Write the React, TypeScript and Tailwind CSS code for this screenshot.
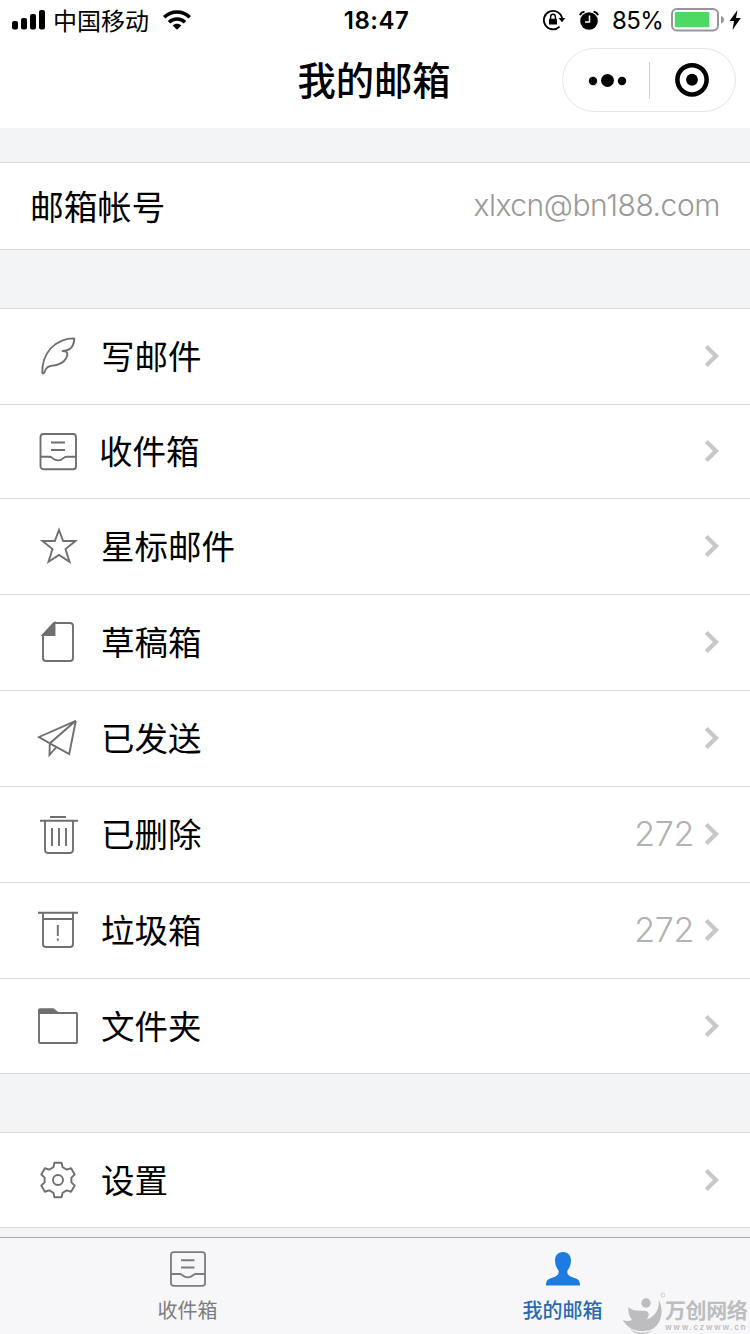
import React from 'react';
import clsx from 'clsx';

type IconProps = { className?: string };

const stroke = {
  fill: 'none',
  stroke: 'currentColor',
  strokeWidth: 1.9,
};

const IconBox: React.FC<{ children: React.ReactNode }> = ({ children }) => (
  <svg viewBox="0 0 44 44" className="h-11 w-11 shrink-0 text-[#6f6f6f]" {...stroke}>
    {children}
  </svg>
);

const FeatherIcon = () => (
  <IconBox>
    <path
      d="M38.2 4.4C30 4.2 20.5 7.6 14.5 14.5C9 21 6.2 30 6.3 38.3C6.5 40 7.9 39.8 8.5 38.2C9.6 35 11 33 13.8 32.2C18.5 31.2 23.5 31.4 28 27C31 23.8 32.6 19.5 30.2 17.8C29.2 17.2 28 17.1 26.6 17C31.5 16.8 35.2 15.2 36.8 11.4C37.8 9 38.6 6.6 38.2 4.4Z"
      strokeLinejoin="round"
    />
  </IconBox>
);

const InboxShape = () => (
  <>
    <rect x="4.5" y="5" width="35.5" height="35.2" rx="3" />
    <path d="M15 13.5H29M15 21H29" />
    <path d="M4.5 27.8H14C16.5 27.8 17 31.4 22 31.4C27 31.4 27.5 27.8 30 27.8H40" />
  </>
);

const InboxIcon = () => (
  <IconBox>
    <InboxShape />
  </IconBox>
);

const StarIcon = () => (
  <IconBox>
    <path d="M23 6L27.2 17H39.5L29.5 25L33.5 37.7L23 31L12.500 37.7L16.500 25L6.500 17H18.800Z" />
  </IconBox>
);

const DraftIcon = () => (
  <IconBox>
    <path d="M7 15V38Q7 41 10 41H34Q37 41 37 38V6Q37 3 34 3H18Z" strokeLinejoin="round" />
    <path d="M7 15L18.5 3V15Z" fill="currentColor" />
  </IconBox>
);

const SentIcon = () => (
  <IconBox>
    <path d="M39.8 4.8L3 21L13.8 27.3ZM13.8 27.3L33.2 38L39.8 4.8M13.8 27.3L13.500 39L20 31.500" />
  </IconBox>
);

const TrashIcon = () => (
  <IconBox>
    <path d="M14 5H30M4 8.8H42M9 9V37.5Q9 41 12.5 41H33.5Q37 41 37 37.5V9M16 16V34M23 16V34M30 16V34" />
  </IconBox>
);

const JunkIcon = () => (
  <IconBox>
    <path d="M2 4.8H42M7 5V36Q7 39 10 39H34Q37 39 37 36V5M7 11H37M21.8 17V28M21.8 30.5V32.8" />
  </IconBox>
);

const FolderIcon = () => (
  <IconBox>
    <path d="M3 9H40.2Q41 9 41 10V38Q41 39 40 39H4Q3 39 3 38Z" />
    <path d="M2 9V6Q2 4.3 4 4.3H17.5L23.5 9Z" fill="currentColor" stroke="none" />
  </IconBox>
);

// half outline of one tooth, repeated six times around the hub
const tooth = [
  [-4.6, -12.8],
  [-3.6, -17.2],
  [3.6, -17.2],
  [4.6, -12.8],
];
const gearPoints = [0, 60, 120, 180, 240, 300]
  .flatMap((deg) => {
    const a = (deg * Math.PI) / 180;
    return tooth.map(([x, y]) => {
      const px = 22 + x * Math.cos(a) - y * Math.sin(a);
      const py = 22 + x * Math.sin(a) + y * Math.cos(a);
      return `${px.toFixed(2)},${py.toFixed(2)}`;
    });
  })
  .join(' ');

const GearIcon = () => (
  <IconBox>
    <polygon points={gearPoints} strokeLinejoin="round" />
    <circle cx="22" cy="22" r="5" />
  </IconBox>
);

const Chevron = () => (
  <svg viewBox="0 0 16 24" className="h-6 w-4 shrink-0" fill="none" stroke="#c7c7cc" strokeWidth="4.2">
    <path d="M2.3 2.6L12 12L2.3 21.4" />
  </svg>
);

const SignalIcon = () => (
  <svg viewBox="0 0 34 22" className="h-[22px] w-[34px]" fill="#000">
    <rect x="0" y="12" width="6" height="8.5" rx="2" />
    <rect x="9" y="9" width="6" height="11.5" rx="2" />
    <rect x="18" y="5" width="6" height="15.5" rx="2" />
    <rect x="27" y="1" width="6" height="19.5" rx="2" />
  </svg>
);

const WifiIcon = () => (
  <svg viewBox="0 0 28 20" className="h-5 w-7" fill="none" stroke="#000" strokeWidth="3.5">
    <path d="M1.2 7.3C8.5 0.3 19.5 0.3 26.8 7.3" />
    <path d="M6 12.2C10.5 8 17.5 8 22 12.2" />
    <path d="M9.6 15.6C12 13.2 16 13.2 18.4 15.6L14 19.8Z" fill="#000" stroke="none" />
  </svg>
);

const RotationLockIcon = () => (
  <svg viewBox="0 0 24 22" className="h-[22px] w-6" fill="none" stroke="#000" strokeWidth="1.8">
    <path d="M17.6 17.6A9.2 9.2 0 1 1 20.2 10" />
    <path d="M16.5 9H23.3L20 13.2Z" fill="#000" stroke="none" />
    <rect x="7" y="9.8" width="8" height="5.8" rx="0.6" fill="#000" stroke="none" />
    <path d="M8.6 10V8A2.4 2.7 0 0 1 13.4 8V10" strokeWidth="1.4" />
  </svg>
);

const AlarmIcon = () => (
  <svg viewBox="0 0 20 20" className="h-5 w-5">
    <circle cx="10" cy="11" r="8.8" fill="#000" />
    <path d="M1 5.2Q2 2 5.5 1.6M19 5.2Q18 2 14.5 1.6" fill="none" stroke="#000" strokeWidth="1.9" />
    <path d="M10.5 5.5V12H6" fill="none" stroke="#fff" strokeWidth="1.5" />
  </svg>
);

const BatteryIcon = () => (
  <svg viewBox="0 0 54 24" className="h-6 w-[54px]">
    <rect x="1" y="1" width="46" height="21.5" rx="5" fill="#fff" stroke="#98949a" strokeWidth="2" />
    <rect x="3.8" y="4" width="34.5" height="15.2" rx="1" fill="#4cd964" />
    <path d="M50 8Q53 9 53 11.8Q53 14.5 50 15.5Z" fill="#98949a" />
  </svg>
);

const BoltIcon = () => (
  <svg viewBox="0 0 12 20" className="h-5 w-3" fill="#000">
    <path d="M8.5 0L0.5 11H5L3.5 20L11.8 8H7Z" />
  </svg>
);

const StatusBar = () => (
  <div className="grid h-10 grid-cols-[1fr_auto_1fr] items-center pl-3 pr-[9px]">
    <div className="flex items-center">
      <SignalIcon />
      <span className="ml-[7px] pt-[3px] text-[24px] leading-none">中国移动</span>
      <span className="ml-[14px] flex">
        <WifiIcon />
      </span>
    </div>
    <span className="pt-[2px] text-[24px] font-semibold leading-none tracking-[0.5px]">18:47</span>
    <div className="flex items-center justify-end">
      <RotationLockIcon />
      <span className="ml-[13px] flex">
        <AlarmIcon />
      </span>
      <span className="ml-[13px] pt-[2px] text-[24px] leading-none tracking-[-0.7px]">85%</span>
      <span className="ml-[8px] flex">
        <BatteryIcon />
      </span>
      <span className="ml-[4px] flex">
        <BoltIcon />
      </span>
    </div>
  </div>
);

const TitleBar = () => (
  <div className="grid h-[88px] grid-cols-[1fr_auto_1fr] items-start pr-[14px] pt-2">
    <span />
    <h1 className="ml-[12px] h-16 text-[38.3px] font-medium leading-[66px]">我的邮箱</h1>
    <div className="flex h-16 w-[174px] items-center justify-self-end rounded-full border border-[#e6e6e6]">
      <svg viewBox="0 0 86 62" className="h-[62px] w-[86px]" fill="#000">
        <circle cx="30" cy="32" r="4.2" />
        <circle cx="44.5" cy="31.5" r="6.5" />
        <circle cx="59" cy="32" r="4.2" />
      </svg>
      <div className="h-[37px] w-px bg-[#d0d0d0]" />
      <svg viewBox="0 0 86 62" className="h-[62px] w-[85px]">
        <circle cx="42.5" cy="30.8" r="14.8" fill="none" stroke="#000" strokeWidth="4.6" />
        <circle cx="42.5" cy="30.8" r="6" fill="#000" />
      </svg>
    </div>
  </div>
);

interface MenuItem {
  label: string;
  icon: React.FC;
  count?: number;
  height: string;
  labelClass?: string;
}

const folders: MenuItem[] = [
  { label: '写邮件', icon: FeatherIcon, height: 'h-[93px] pb-[2px]' },
  { label: '收件箱', icon: InboxIcon, height: 'h-[91px] pb-[2px]', labelClass: 'ml-[19px]' },
  { label: '星标邮件', icon: StarIcon, height: 'h-[93px] pb-[2px]' },
  { label: '草稿箱', icon: DraftIcon, height: 'h-[93px] pb-[2px]' },
  { label: '已发送', icon: SentIcon, height: 'h-[93px] pb-[2px]' },
  { label: '已删除', icon: TrashIcon, count: 272, height: 'h-[93px] pb-[2px]' },
  { label: '垃圾箱', icon: JunkIcon, count: 272, height: 'h-[93px] pb-[2px]' },
  { label: '文件夹', icon: FolderIcon, height: 'h-[94px]' },
];

const settings: MenuItem[] = [{ label: '设置', icon: GearIcon, height: 'h-[94px]' }];

const MenuList: React.FC<{ items: MenuItem[] }> = ({ items }) => (
  <ul className="divide-y divide-[#d9d9d9] border-y border-[#d9d9d9] bg-white">
    {items.map(({ label, icon: Icon, count, height, labelClass }) => (
      <li key={label} className={clsx('box-content flex items-center pl-9 pr-[30px]', height)}>
        <Icon />
        <span className={clsx('pt-[4px] text-[33.5px] leading-none', labelClass || 'ml-[21px]')}>{label}</span>
        <span className="ml-auto mr-[10px] text-[34px] font-light leading-none tracking-[-0.3px] text-[#b2b2b2]">
          {count}
        </span>
        <Chevron />
      </li>
    ))}
  </ul>
);

const PersonIcon: React.FC<IconProps> = ({ className }) => (
  <svg viewBox="0 0 34 34" className={className} fill="#1e7ce0">
    <path d="M17 0C22 0 25 3.5 25 8.5C25 13 23.3 16 21.5 18.5C20.8 21.5 22 23.5 25 24.7L30.5 26.8C33 28 34 29.5 34 33.5H0C0 29.5 1 28 3.5 26.8L9 24.7C12 23.5 13.2 21.5 12.5 18.5C10.7 16 9 13 9 8.5C9 3.5 12 0 17 0Z" />
  </svg>
);

const TabBar = () => (
  <nav className="grid h-[97px] grid-cols-2 border-t border-[#a9a9ad] bg-[#f7f7fa]">
    <div className="flex flex-col items-center pt-[13px] text-[#7c7c80]">
      <svg viewBox="3.5 4 37.5 37.2" className="h-[36px] w-[36px]" {...stroke}>
        <InboxShape />
      </svg>
      <span className="mt-[14px] text-[20px] leading-none">收件箱</span>
    </div>
    <div className="flex flex-col items-center pt-[14px] text-[#2a69ae]">
      <PersonIcon className="h-[34px] w-[34px]" />
      <span className="mt-[15px] text-[20px] font-medium leading-none">我的邮箱</span>
    </div>
  </nav>
);

const Watermark = () => (
  <div className="absolute bottom-0 right-0 flex h-[44px] w-[129px] text-[#bdbdbf]">
    <svg viewBox="0 0 44 44" className="h-11 w-11 shrink-0" fill="currentColor">
      <circle cx="25" cy="13" r="4.7" />
      <path d="M7.5 17C12 22 18 20 24 21C29 21.5 28.5 26 25.5 29.5C35 26.5 39 18 37.5 9C43 20 41 32 33 38C23 44 8 42 1.5 29.5C5 31.5 8 31.5 11 30C8 26 7 22 7.5 17Z" />
      <path d="M9 38.5C15 44 26 44 32 39.5C26 46 14 46 9 38.5Z" />
      <circle cx="42" cy="5" r="2" fill="none" stroke="currentColor" strokeWidth="0.7" />
    </svg>
    <div className="flex flex-col pt-[10px]">
      <span className="whitespace-nowrap text-[21px] font-bold leading-[22px] tracking-[-0.4px]">万创网络</span>
      <span className="mt-[1px] whitespace-nowrap text-[8px] font-semibold leading-[8px] tracking-[1.6px]">www.czwww.cn</span>
    </div>
  </div>
);

const App: React.FC = () => {
  return (
    <div className="relative flex h-[1334px] w-[750px] flex-col overflow-hidden bg-[#f3f4f6] font-[Inter,'Noto_Sans_CJK_SC',sans-serif] text-black">
      <header className="bg-white">
        <StatusBar />
        <TitleBar />
      </header>

      <main className="flex-1">
        <section className="mt-[34px] flex h-[88px] items-center justify-between border-y border-[#d9d9d9] bg-white px-[30px]">
          <span className="pt-[3px] text-[33.8px] leading-none">邮箱帐号</span>
          <span className="pb-[2px] text-[30px] font-light leading-none tracking-[-0.45px] text-[#999]">
            xlxcn@bn188.com
          </span>
        </section>

        <section className="mt-[58px]">
          <MenuList items={folders} />
        </section>

        <section className="mt-[58px]">
          <MenuList items={settings} />
        </section>
      </main>

      <TabBar />
      <Watermark />
    </div>
  );
};

export default App;
